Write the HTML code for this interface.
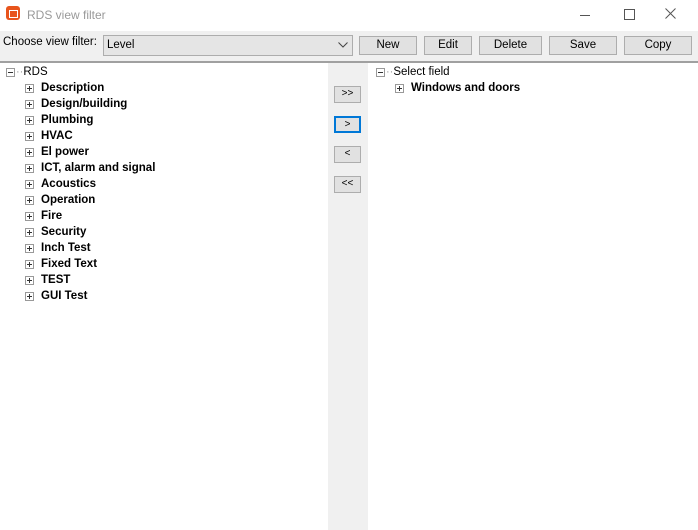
<!DOCTYPE html><html><head><style>
body{margin:0;width:698px;height:530px;position:relative;font-family:"Liberation Sans",sans-serif;font-size:11px;background:#fff;overflow:hidden}
.a{position:absolute}
.btn{position:absolute;top:36px;height:17px;background:#e1e1e1;border:1px solid #adadad;text-align:center;line-height:17px;font-size:11.5px;color:#000}
.sb{position:absolute;left:334px;width:25px;height:15px;background:#e1e1e1;border:1px solid #adadad;text-align:center;line-height:14px;font-size:10px}
.row{position:absolute;height:16px;line-height:16px;white-space:nowrap}
.pm{position:absolute;width:7px;height:7px;border:1px solid #999;background:#fff;top:4px}
.pm:before{content:"";position:absolute;left:1px;top:3px;width:5px;height:1px;background:#333}
.pm.p:after{content:"";position:absolute;left:3px;top:1px;width:1px;height:5px;background:#333}
.b{font-weight:bold;font-size:11.5px}
</style></head><body>
<div class="a" style="left:0;top:0;width:698px;height:31px;background:#fff"></div>
<div class="a" style="left:6px;top:6px;width:14px;height:14px;background:#e8541c;border-radius:3px"></div>
<div class="a" style="left:9px;top:10px;width:7px;height:6px;border:1px solid #fff"></div>
<div class="a" style="left:27px;top:8px;color:#999;font-size:12px">RDS view filter</div>
<div class="a" style="left:580px;top:15px;width:10px;height:1px;background:#555"></div>
<div class="a" style="left:624px;top:9px;width:9px;height:9px;border:1px solid #555"></div>
<svg class="a" style="left:665px;top:8px" width="11" height="11"><path d="M0.5 0.5L10.5 10.5M10.5 0.5L0.5 10.5" stroke="#555" stroke-width="1"/></svg>
<div class="a" style="left:0;top:31px;width:698px;height:30px;background:#f0f0f0"></div>
<div class="a" style="left:0;top:61px;width:698px;height:2px;background:#a0a0a0"></div>
<div class="a" style="left:3px;top:36px;font-size:11.5px">Choose view filter:</div>
<div class="a" style="left:103px;top:35px;width:248px;height:19px;background:#e5e5e5;border:1px solid #adadad"></div>
<div class="a" style="left:107px;top:39px;font-size:11.5px">Level</div>
<svg class="a" style="left:338px;top:42px" width="10" height="6"><path d="M0.5 0.5L5 5L9.5 0.5" stroke="#444" fill="none"/></svg>
<div class="btn" style="left:359px;width:56px">New</div>
<div class="btn" style="left:424px;width:46px">Edit</div>
<div class="btn" style="left:479px;width:61px">Delete</div>
<div class="btn" style="left:549px;width:66px">Save</div>
<div class="btn" style="left:624px;width:66px">Copy</div>
<div class="a" style="left:328px;top:63px;width:40px;height:467px;background:#f0f0f0"></div>
<div class="sb" style="top:86px">&gt;&gt;</div>
<div class="sb" style="top:116px;border:2px solid #0078d7;width:23px;height:13px;line-height:13px">&gt;</div>
<div class="sb" style="top:146px">&lt;</div>
<div class="sb" style="top:176px">&lt;&lt;</div>
<div class="row" style="left:6px;top:64px"><span class="pm" style="left:0"></span><span style="margin-left:10px;color:#999">··</span><span style="font-size:11.5px">RDS</span></div>
<div id="L"></div>
<div class="row" style="left:376px;top:64px"><span class="pm" style="left:0"></span><span style="margin-left:10px;color:#999">··</span><span style="font-size:11.5px">Select field</span></div>
<div class="row" style="left:395px;top:80px"><span class="pm p" style="left:0"></span><span class="b" style="margin-left:16px">Windows and doors</span></div>
<script>
var n=["Description","Design/building","Plumbing","HVAC","El power","ICT, alarm and signal","Acoustics","Operation","Fire","Security","Inch Test","Fixed Text","TEST","GUI Test"],h="";
n.forEach(function(t,i){h+='<div class="row" style="left:25px;top:'+(80+16*i)+'px"><span class="pm p" style="left:0"></span><span class="b" style="margin-left:16px">'+t+'</span></div>'});
document.getElementById("L").innerHTML=h;
</script>
</body></html>
